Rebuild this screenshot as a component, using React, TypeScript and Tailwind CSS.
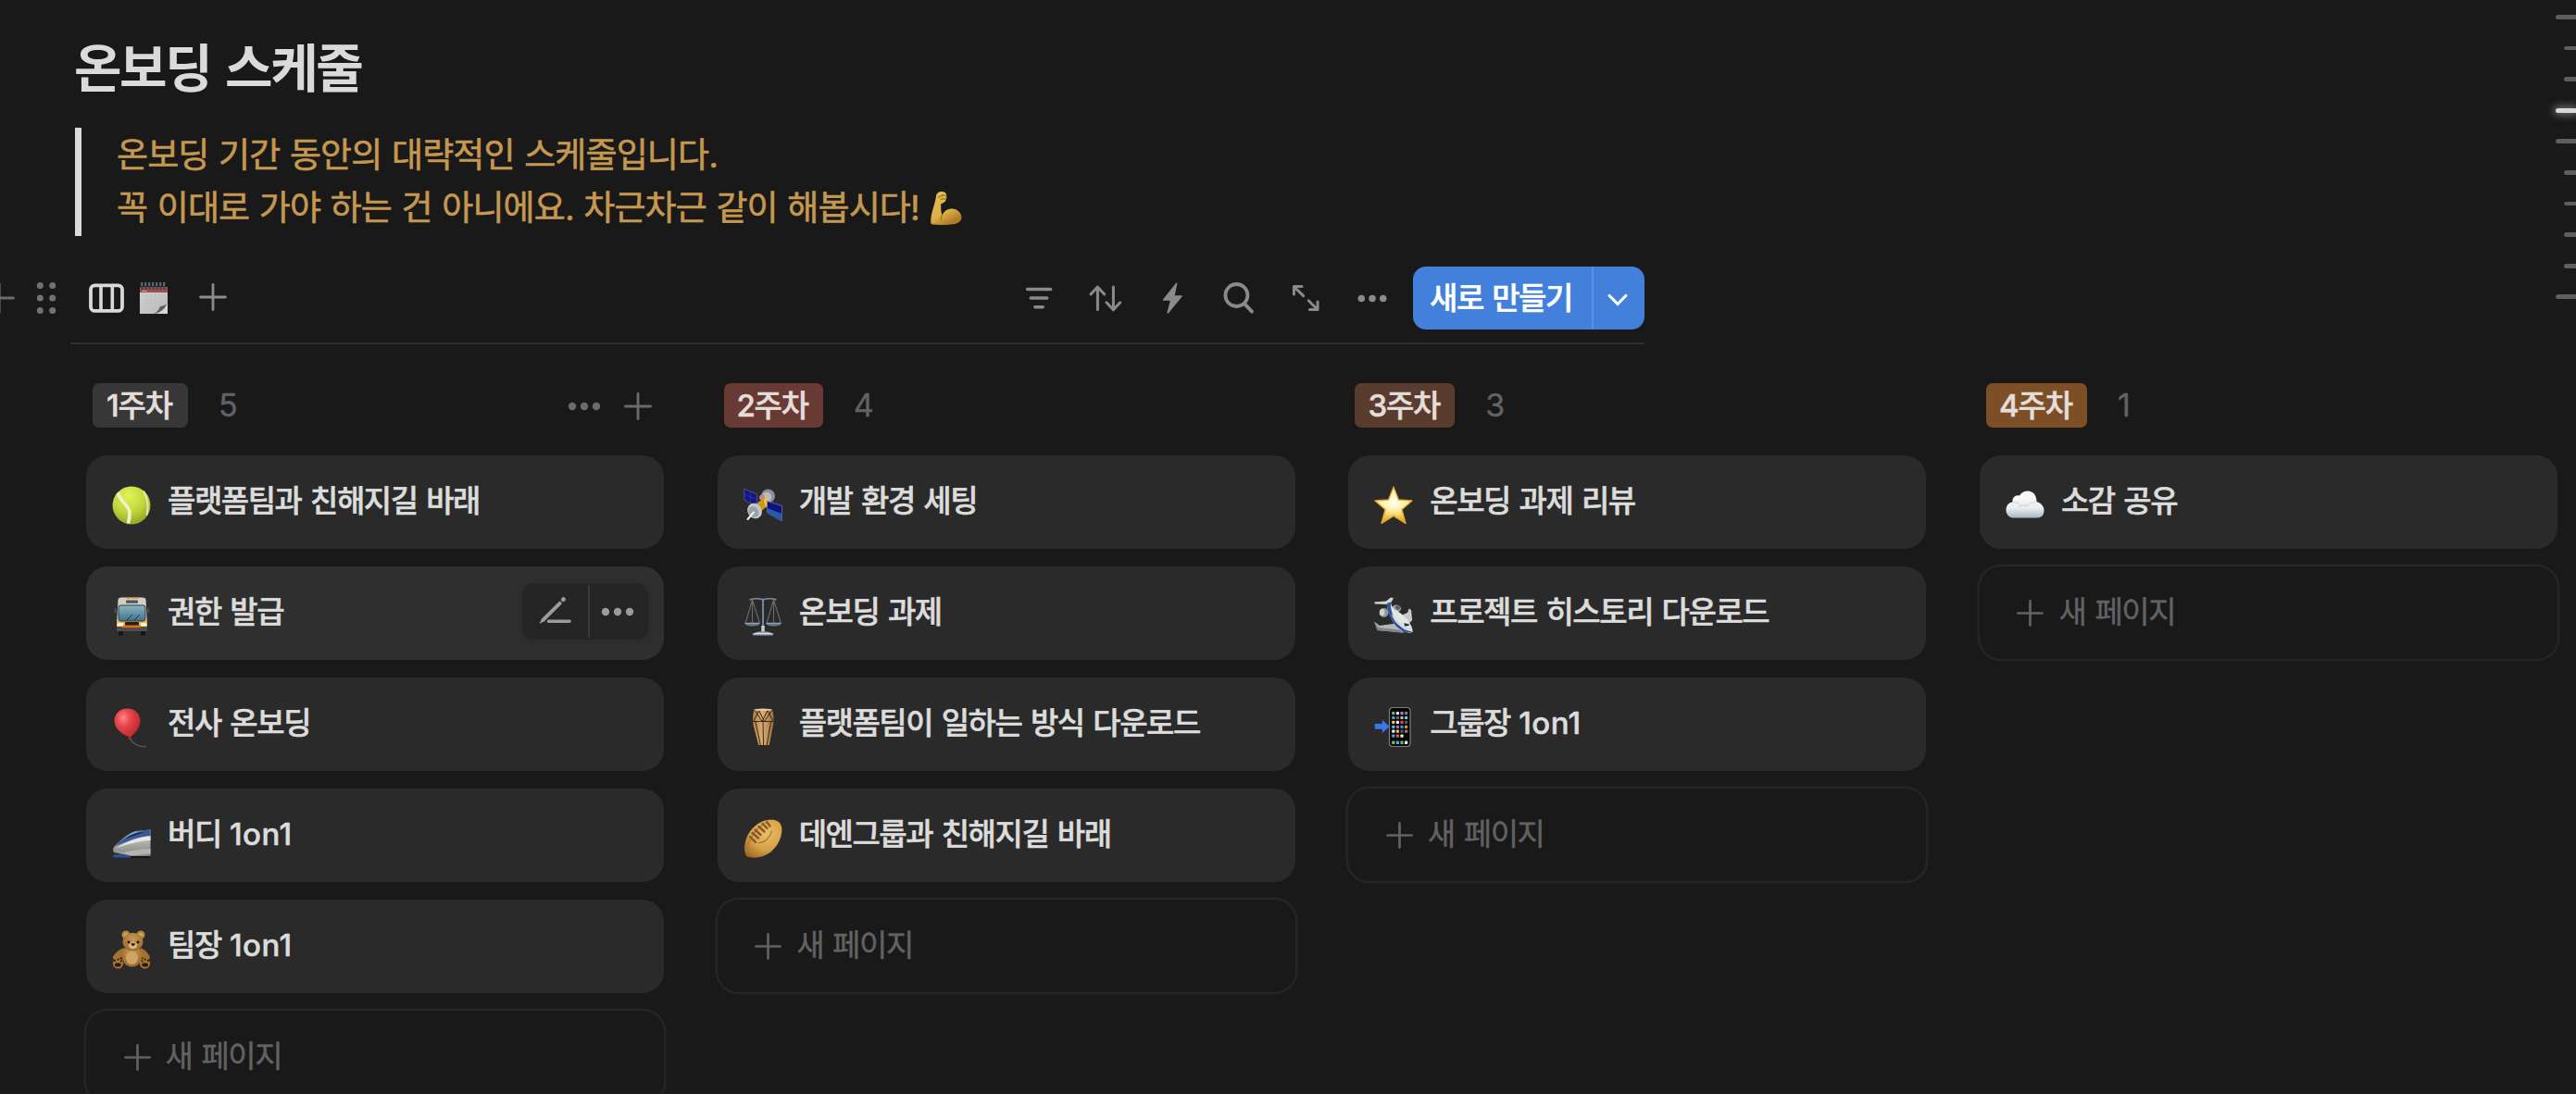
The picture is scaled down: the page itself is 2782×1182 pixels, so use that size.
import React from "react";

type IconProps = { className?: string };

const Plus = ({ className = "" }: IconProps) => (
  <svg viewBox="0 0 30 30" className={className} fill="none" stroke="currentColor" strokeWidth="2.8" strokeLinecap="round">
    <path d="M15 1.5v27M1.5 15h27" />
  </svg>
);

const Dots = ({ className = "" }: IconProps) => (
  <svg viewBox="0 0 36 10" className={className} fill="currentColor">
    <circle cx="5" cy="5" r="4.2" />
    <circle cx="18" cy="5" r="4.2" />
    <circle cx="31" cy="5" r="4.2" />
  </svg>
);

const Grip = () => (
  <svg viewBox="0 0 22 36" className="h-9 w-[22px] shrink-0" fill="#727272">
    {[4.3, 17.7].map((x) => [4.6, 18, 31.4].map((y) => <circle key={`${x}-${y}`} cx={x} cy={y} r="3.5" />))}
  </svg>
);

const BoardIcon = () => (
  <svg viewBox="0 0 38 32" className="h-8 w-[38px] shrink-0" fill="none" stroke="#d9d9d9">
    <rect x="2" y="2.3" width="34" height="27.6" rx="4.5" strokeWidth="3.8" />
    <path d="M13 2v28M25.3 2v28" strokeWidth="3.6" />
  </svg>
);

const Notepad = () => (
  <svg viewBox="0 0 32 36" className="h-9 w-8 shrink-0">
    <defs>
      <linearGradient id="np" x1="0" y1="0" x2="1" y2="1">
        <stop offset="0" stopColor="#d2d2d0" />
        <stop offset="1" stopColor="#b9b9b8" />
      </linearGradient>
    </defs>
    <path d="M1 6h30v29H1z" fill="url(#np)" />
    <path d="M1 6h30v6H1z" fill="#9c4f4e" />
    <path d="M3.5 10.5h5" stroke="#d9a5a3" strokeWidth="1" />
    <path d="M3 16h26M3 20h26M3 24h22M3 28h18M8 13v20M13 13v20M18 13v18M23 13v12" stroke="#bfc1c2" strokeWidth=".7" />
    <path d="M31 22c-2 5-5 4-8 5-2 4-3 6-7 8h15z" fill="#d6d6d5" />
    <path d="M31 22c-2 5-5 4-8 5-2 4-3 6-7 8 8-1 13-6 15-13z" fill="#5d5d5d" />
    <path d="M3.5 1v8M7.5 1v8M11.5 1v8M15.5 1v8M19.5 1v8M23.5 1v8M27.5 1v8" stroke="#39424a" strokeWidth="2" />
    <path d="M3 1v4M7 1v4M11 1v4M15 1v4M19 1v4M23 1v4M27 1v4" stroke="#8b979f" strokeWidth="1" />
  </svg>
);

const FilterIcon = () => (
  <svg viewBox="0 0 36 36" className="size-9" fill="none" stroke="currentColor" strokeWidth="3.6" strokeLinecap="round">
    <path d="M5.6 8.500h25M9.300 18h17.400M13.800 27.700h8.400" />
  </svg>
);
const SortIcon = () => (
  <svg viewBox="0 0 38 36" className="h-9 w-[38px]" fill="none" stroke="currentColor" strokeWidth="3" strokeLinecap="round" strokeLinejoin="round">
    <path d="M10.4 30.600V6.500M3 14l7.400-8 7.400 8M27.400 6v24M20 22.800l7.400 8 7.400-8" />
  </svg>
);
const BoltIcon = () => (
  <svg viewBox="0 0 36 36" className="size-9" fill="currentColor" stroke="currentColor" strokeWidth="1.600" strokeLinejoin="round">
    <path d="M22.600 2.400 8.600 20h8.200l-3.600 14L28 16h-8.300z" />
  </svg>
);
const SearchIcon = () => (
  <svg viewBox="0 0 36 36" className="size-9" fill="none" stroke="currentColor" strokeWidth="3.800" strokeLinecap="round">
    <circle cx="15.400" cy="15" r="12" />
    <path d="M24.400 24.600l7.600 8" />
  </svg>
);
const ExpandIcon = () => (
  <svg viewBox="0 0 36 36" className="size-9" fill="none" stroke="currentColor" strokeWidth="3" strokeLinecap="round" strokeLinejoin="round">
    <path d="M5.400 14V5.600H14M6 6.200l9.600 9.400M31 22v8.600h-8.600M30.400 30l-9.200-9.200" />
  </svg>
);
const PencilIcon = () => (
  <svg viewBox="0 0 34 30" className="h-[30px] w-[34px]" fill="none" stroke="#9b9b9b" strokeLinecap="round">
    <path d="M3.200 26.200 21.600 7.800" strokeWidth="4" />
    <path d="M25.200 3.900l.4-.4" strokeWidth="4.600" />
    <path d="M.8 28.600 5 24" strokeWidth="1.600" />
    <path d="M9.500 27.200H32" strokeWidth="3.400" />
  </svg>
);

const Flex = () => (
  <svg viewBox="0 0 36 38" className="ml-[11px] h-[38px] w-9 shrink-0">
    <defs>
      <linearGradient id="fx" x1="0" y1="0" x2=".5" y2="1">
        <stop offset="0" stopColor="#e6c05c" />
        <stop offset=".7" stopColor="#d9b045" />
        <stop offset="1" stopColor="#b07c28" />
      </linearGradient>
    </defs>
    <path
      d="M7 6C7 3 10 .8 13 1c3.500 0 5.500 2 5.300 5 .2 3-1 6-3.800 7.200-2 .8-2.500.5-2.300 3-.2 4 .3 7 1.300 10.300C15.500 22 19.500 19.500 24 19.500c6 0 10.500 5 10.500 9.500 0 4.500-5 7.500-12 7.500-7.500 1-16 .5-21-.5C0 27 5 18 7 6z"
      fill="url(#fx)"
    />
    <path d="M13.500 26.500c-1.200 1.500-1.500 3-1.200 5M9.500 7.500c1-1.500 3-2 4.500-1.500M12 9.500c1.500-.8 3.500-.8 5.500-.4M13 5c1.800-.6 3.500 0 4.500 1.200" fill="none" stroke="#a0701f" strokeWidth="1.200" strokeLinecap="round" />
  </svg>
);

const TennisBall = () => (
  <>
    <defs>
      <radialGradient id="tb" cx=".42" cy=".25" r=".8">
        <stop offset="0" stopColor="#e2f25a" />
        <stop offset=".55" stopColor="#c0d63c" />
        <stop offset="1" stopColor="#8a9f28" />
      </radialGradient>
    </defs>
    <circle cx="21" cy="21" r="20.500" fill="url(#tb)" />
    <path d="M6.500 7.500C9 18 18.500 20 19 29c.2 4-.6 8-1.600 11.500" fill="none" stroke="#eef2c8" strokeWidth="3.600" />
    <path d="M34 5.500c4.500 8 5.500 18 3.500 26" fill="none" stroke="#e3ebb0" strokeWidth="2" />
  </>
);

const Bus = () => (
  <>
    <defs>
      <linearGradient id="bs" x1="0" y1="0" x2="0" y2="1">
        <stop offset="0" stopColor="#8cb6c4" />
        <stop offset="1" stopColor="#3f708c" />
      </linearGradient>
    </defs>
    <path d="M7 34h5v7.500H7zM31 34h5v7.500h-5z" fill="#151515" />
    <path d="M3.500 12v5M39 12v5" stroke="#4a4a4a" strokeWidth="2.400" />
    <path d="M6.500 3Q7 .6 10 .6h22.500Q36 .6 36.500 3L38 30v6H5v-6z" fill="#d6cfbf" />
    <path d="M5 26h33v9H5z" fill="#eeb52e" />
    <path d="M5 32h33v5H5z" fill="#4e4f50" />
    <path d="M11 30h20v3H11z" fill="#dd6f1f" />
    <rect x="7" y="9" width="29" height="17" rx="2.500" fill="url(#bs)" stroke="#263a44" strokeWidth="1" />
    <rect x="15" y="3.500" width="13" height="3.200" rx="1" fill="#4d5666" />
    <path d="M16 1.300h3M20.500 1.300h3M25 1.300h3" stroke="#e58a2c" strokeWidth="1.600" />
    <path d="M16 25l6-6M24 25l6-6" stroke="#1f3642" strokeWidth="1" />
    <rect x="14" y="27" width="15" height="3.600" rx="1" fill="#2b2113" />
    <rect x="5.500" y="28" width="7" height="3.600" rx="1.500" fill="#f8f4e4" />
    <rect x="30.500" y="28" width="7" height="3.600" rx="1.500" fill="#f8f4e4" />
  </>
);

const Balloon = () => (
  <>
    <defs>
      <radialGradient id="bl" cx=".35" cy=".3" r=".75">
        <stop offset="0" stopColor="#f58a8c" />
        <stop offset=".35" stopColor="#e9474d" />
        <stop offset="1" stopColor="#b32427" />
      </radialGradient>
    </defs>
    <path d="M19.500 33c3 5.500 9 9.200 17.500 8.700" fill="none" stroke="#5f6366" strokeWidth="1.200" />
    <path d="M16.500.5c8.500 0 14 6 14 13.500 0 8-6 13-10.700 17.500l1.400 2.400h-3.600l.6-2.600C11 28.500 2.500 22 2.500 14 2.500 6.500 8 .5 16.500.5z" fill="url(#bl)" />
  </>
);

const Train = () => (
  <>
    <defs>
      <linearGradient id="tr" x1="0" y1="0" x2="0" y2="1">
        <stop offset="0" stopColor="#d6d7d5" />
        <stop offset="1" stopColor="#85847e" />
      </linearGradient>
    </defs>
    <path d="M41.500 11.500V40H20L2 36Q-.5 32 4 28 17 15 26 13z" fill="url(#tr)" />
    <path d="M41.500 11.500v6.500C28 19 16 24 3.500 29.500 14 18 22 14 30 12.500z" fill="#3a5a99" />
    <path d="M34 13c-10 1-17 5-22 9.500 3-4 9-8 15-9z" fill="#8fc3e6" />
    <path d="M35 13.500c-9 1.500-15 3.500-21 7.500 7-2 15-4.500 21-7.500z" fill="#1d2b45" />
    <path d="M41.500 18.500v4.500C29 23.500 16 27.500 5 31 15 25 27 19.500 41.500 18.500z" fill="#e6e7e6" />
    <path d="M41.500 32C30 32 18 35 12 36l-9-2 17 5.500 21.500-2z" fill="#b5b4ae" />
    <path d="M.5 39q9.500-2.500 20 .8v1.700H2z" fill="#2f4f9a" />
    <path d="M20 40h21.500v1.600H20z" fill="#0f1114" />
  </>
);

const Bear = () => (
  <>
    <defs>
      <radialGradient id="br" cx=".5" cy=".35" r=".7">
        <stop offset="0" stopColor="#c99b55" />
        <stop offset="1" stopColor="#96642a" />
      </radialGradient>
    </defs>
    <circle cx="15" cy="5" r="4.500" fill="#b9843f" />
    <circle cx="31" cy="5" r="4.500" fill="#b9843f" />
    <circle cx="15" cy="5.300" r="2.300" fill="#d4a761" />
    <circle cx="31" cy="5.300" r="2.300" fill="#d4a761" />
    <path d="M13 19C7 21 2 26 .8 29.500 1 32.500 5 32 9 30l5-4zM31 19c5 2 9 7 10 10.500-.5 3-4 2.500-7.500.5L28 26z" fill="#a4712f" />
    <ellipse cx="21.500" cy="28" rx="11" ry="11.500" fill="url(#br)" />
    <ellipse cx="21.500" cy="30" rx="6.500" ry="7" fill="#cfa566" />
    <ellipse cx="22.500" cy="12.500" rx="11" ry="9.800" fill="url(#br)" />
    <ellipse cx="22.500" cy="16.500" rx="4.600" ry="3.800" fill="#dcb678" />
    <circle cx="18" cy="13" r="1.400" fill="#171008" />
    <circle cx="28" cy="13" r="1.400" fill="#171008" />
    <path d="M20.800 14.800h3.800l-1.900 2.200z" fill="#20140a" stroke="#20140a" strokeLinejoin="round" />
    <circle cx="6.500" cy="36" r="5.600" fill="#a87535" />
    <circle cx="35.500" cy="36" r="5.600" fill="#a87535" />
    <path d="M4.800 37.500h3M34.200 37.500h3" stroke="#2a1a0b" strokeWidth="3.800" strokeLinecap="round" />
    <path d="M3 33h.1M6.500 31.800h.1M9.800 33.500h.1M32.500 33.500h.1M35.700 31.800h.1M39 33h.1" stroke="#2a1a0b" strokeWidth="2" strokeLinecap="round" />
  </>
);

const Satellite = () => (
  <>
    <circle cx="26.500" cy="11" r="7.500" fill="#8d9094" />
    <circle cx="25" cy="12" r="5.300" fill="#b9bcbe" />
    <path d="M13 20l10-8 5 8-10 8z" fill="#c89a20" />
    <path d="M21 13l3-2 4 9-4 3z" fill="#e8c93c" />
    <circle cx="20" cy="12.500" r="3" fill="#c98784" />
    <path d="M.8 3 14.500 9v9L9.500 20 .8 15z" fill="#14177e" stroke="#5c65a8" strokeWidth=".7" />
    <path d="M7.600 6v12M.8 9l13.700 6" stroke="#3a42b4" strokeWidth=".6" />
    <path d="M25.500 16.500 41.500 21.500V38L25.500 29z" fill="#0e1280" stroke="#6f86b8" strokeWidth=".7" />
    <path d="M25.500 24 41.500 30v8L25.500 29z" fill="#2a5ba8" />
    <ellipse cx="12" cy="27" rx="7.600" ry="8.600" transform="rotate(-35 12 27)" fill="#c3c7ca" />
    <ellipse cx="10.800" cy="28" rx="5.200" ry="6.200" transform="rotate(-35 10.800 28)" fill="#9ca1a5" />
    <path d="M4.500 36l6.500-7.500" stroke="#f0f0f0" strokeWidth="2" strokeLinecap="round" />
  </>
);

const Scales = () => (
  <>
    <path d="M6.500 3q7-2.500 14.500 0 7.500-2.500 14.500 0" fill="none" stroke="#7f8c9a" strokeWidth="1.600" />
    <path d="M9.500 3 2 28.500M9.500 3v25M9.500 3 17.500 28.500M32.500 3 25 28.500M32.500 3v25M32.500 3 40.500 28.500" fill="none" stroke="#666c72" strokeWidth="1.100" />
    <path d="M21 1.500v33" stroke="#71869e" strokeWidth="2" />
    <path d="M21 31v6" stroke="#c3ccd4" strokeWidth="3.600" />
    <path d="M.8 28h17.400q-1.200 3.600-8.700 3.600T.8 28zM23.800 28h17.400q-1.200 3.600-8.700 3.600t-8.700-3.600z" fill="#66788c" />
    <path d="M2 28.300h15M25 28.300h15" stroke="#a3b0bc" strokeWidth="1" />
    <path d="M9.500 39.500q11.500-5 23 0l-.8 2H10.300z" fill="#94a3b2" />
    <path d="M12 39.500h18" stroke="#e3e8ec" strokeWidth="1" />
  </>
);

const Drum = () => (
  <>
    <defs>
      <linearGradient id="dr" x1="0" y1="0" x2="1" y2="0">
        <stop offset="0" stopColor="#a97c47" />
        <stop offset=".45" stopColor="#dcae76" />
        <stop offset="1" stopColor="#9b6e3b" />
      </linearGradient>
    </defs>
    <path d="M11.500 1.500h19.500q2.500 8 1 17L27.500 41h-11L10.500 18.500q-1.500-9 1-17z" fill="url(#dr)" />
    <path d="M10 14.500h22.500M12 2l8 12.500L26.500 1.500M16 1.500l6.500 13L31 2M11 14 17 2M25.500 2l6.500 12M13 15l5.500 26M21 15l.5 26M29.500 15l-4.500 26M16 40.500h12" fill="none" stroke="#3a2714" strokeWidth="1" />
    <ellipse cx="21.200" cy="1.800" rx="10" ry="1.200" fill="#e9c795" />
  </>
);

const Rugby = () => (
  <>
    <defs>
      <radialGradient id="rg" cx=".6" cy=".35" r=".8">
        <stop offset="0" stopColor="#e9bf66" />
        <stop offset=".55" stopColor="#d6a147" />
        <stop offset="1" stopColor="#9a6423" />
      </radialGradient>
    </defs>
    <path d="M27 .8c8-.8 13 1.500 14.200 8 1.200 8.500-3 19-11 26-7.500 6.500-18 8-26 6C.6 38 0 31 2.500 22.500 6 11 16.500 1.800 27 .8z" fill="url(#rg)" />
    <path d="M4 34C4 26 10 12 24 4" fill="none" stroke="#b07c2f" strokeWidth="1.400" />
    <path d="M16.500 25.500c6 0 12-5 14-13" fill="none" stroke="#8a5d24" strokeWidth="1" />
    <path d="M7 19l6 6M9.500 15l6.500 5.500M12.500 11.500l6 5.500M16.500 8l6 5.500M20.500 5l5 5M25 3l3.500 4.500" stroke="#8b5529" strokeWidth="2.400" strokeLinecap="round" />
  </>
);

const Star = () => (
  <>
    <defs>
      <linearGradient id="st" x1="0" y1="0" x2="0" y2="1">
        <stop offset="0" stopColor="#fdf3b0" />
        <stop offset=".5" stopColor="#fdf3a8" />
        <stop offset=".78" stopColor="#f2cf4d" />
        <stop offset="1" stopColor="#d9902c" />
      </linearGradient>
      <radialGradient id="st2" cx=".5" cy=".42" r=".5">
        <stop offset="0" stopColor="#fffff2" />
        <stop offset="1" stopColor="#fffbd0" stopOpacity="0" />
      </radialGradient>
    </defs>
    <path
      d="M21 1.200 26.500 15l14.500 1-11 9.500 4 15L21 32.500 8 40.500l4-15L1 16 15.500 15z"
      fill="url(#st)"
      stroke="#e3a63a"
      strokeWidth="1.300"
      strokeLinejoin="round"
    />
    <path d="M21 4 25.500 16.500l12 .8-9.200 7.700 3.200 12L21 30.500 10.500 37l3.200-12L4.500 17.300l12-.8z" fill="url(#st2)" />
  </>
);

const Plane = () => (
  <>
    <path d="M0 5.500 13 4.500 18 .5l3 .8-2.500 4.500L14 8 1 7.500z" fill="#d0d3d6" />
    <path d="M27 21 36 17l1.700-4.500L40 14l1.200 11L35 31z" fill="#c6cacd" />
    <path d="M0 26.500 6 31l18-2.500 8 10L3.500 36z" fill="#b4b8bb" />
    <path d="M0 26.500 5 33l22 2.500 6 3.500L3.500 36z" fill="#7f8487" />
    <ellipse cx="24" cy="12.500" rx="5" ry="4" fill="#9da3a8" />
    <ellipse cx="25.500" cy="11.500" rx="2.600" ry="2.400" fill="#5d6367" />
    <path d="M13.500 7 18 5.500q1 7 6 9 10 6 14.500 14 3.500 5 3 9.500-5 2-12-2Q21 31 17.500 21 14 14 13.500 7z" fill="#e3e5e7" />
    <path d="M13.500 7 18 5.500q-.5 5 1 10 2.500 10 9 15.500 6 5.500 13.500 6.500-6 2.500-12-1.500Q21 31 17.500 21 14 14 13.500 7z" fill="#2f559f" />
    <path d="M18.500 18q3 9 9 13 5 5 11 5.500 2-1 2.500-3Q32 33 24 24z" fill="#d5d8db" />
    <ellipse cx="10.500" cy="17" rx="5" ry="5" fill="#8f959a" />
    <ellipse cx="8.800" cy="16.500" rx="2.800" ry="3.800" fill="#cdd1d4" />
    <path d="M32 28.500q4.500-.5 6.500 2l-5 1.200z" fill="#23282e" />
  </>
);

const appRows = [
  ["#5dc35f", "#e9e9e9", "#b27bd6", "#7d7f84"],
  ["#55a4e8", "#666b70", "#c9b48a", "#6ad0ea"],
  ["#e3d04c", "#f0f0f0", "#dd4b45", "#55585c"],
  ["#49c7d8", "#c955c9", "#3f8fe6", "#ee8a2f"],
  ["#efefef", "#e2c13f", "#55585c", "#85878b"],
  ["#4aa3e8", "#e35550", "#f0f0f0", "#0c0c0c"],
];

const Phone = () => (
  <>
    <rect x="16.500" y="-.5" width="22.500" height="42" rx="3.400" fill="#060606" stroke="#7d7d7d" strokeWidth="1.200" />
    {appRows.map((row, y) => row.map((c, x) => <rect key={`${x}-${y}`} x={19.2 + x * 4.6} y={4 + y * 4.9} width="3.200" height="3.200" rx=".7" fill={c} />))}
    {["#5fce5a", "#46a6ee", "#58c957", "#ececec"].map((c, x) => (
      <rect key={c} x={19.2 + x * 4.6} y="35.500" width="3.200" height="3.600" rx=".7" fill={c} />
    ))}
    <path d="M.8 17h8v-4.300l7.700 7.300-7.700 7v-4.300h-8z" fill="#3878ee" />
  </>
);

const Cloud = () => (
  <>
    <defs>
      <linearGradient id="cl" x1="0" y1="0" x2="0" y2="1">
        <stop offset="0" stopColor="#ffffff" />
        <stop offset=".65" stopColor="#e9edf1" />
        <stop offset="1" stopColor="#a9b6c0" />
      </linearGradient>
    </defs>
    <path d="M8 34.500C3 34 .5 30 .5 26c0-5 3-8 7-8.500-.5-5 3-8 7.500-7C17 7 20.500 5.500 24 5.500c6 0 9.500 5 9.500 11.500 5 1.500 8 5 8 9.500 0 5-3 8-7.500 8z" fill="url(#cl)" />
    <path d="M14.500 23c1.500-2.500 5-3 7.500-1 2-2.500 6-4 10-4.500M9 18c3-.5 5 .5 6 2" fill="none" stroke="#ccd4da" strokeWidth="1.200" strokeLinecap="round" />
  </>
);

type Card = { title: string; suffix?: string; art: React.FC; hovered?: boolean };
type Column = { name: string; tag: string; cards: Card[]; actions?: boolean };

const columns: Column[] = [
  {
    name: "1주차",
    tag: "bg-[#373737] w-[103px]",
    actions: true,
    cards: [
      { title: "플랫폼팀과 친해지길 바래", art: TennisBall },
      { title: "권한 발급", art: Bus, hovered: true },
      { title: "전사 온보딩", art: Balloon },
      { title: "버디", suffix: "1on1", art: Train },
      { title: "팀장", suffix: "1on1", art: Bear },
    ],
  },
  {
    name: "2주차",
    tag: "bg-[#693a34] w-[107px]",
    cards: [
      { title: "개발 환경 세팅", art: Satellite },
      { title: "온보딩 과제", art: Scales },
      { title: "플랫폼팀이 일하는 방식 다운로드", art: Drum },
      { title: "데엔그룹과 친해지길 바래", art: Rugby },
    ],
  },
  {
    name: "3주차",
    tag: "bg-[#5a3c2f] w-[108px]",
    cards: [
      { title: "온보딩 과제 리뷰", art: Star },
      { title: "프로젝트 히스토리 다운로드", art: Plane },
      { title: "그룹장", suffix: "1on1", art: Phone },
    ],
  },
  { name: "4주차", tag: "bg-[#7d4f27] w-[109px]", cards: [{ title: "소감 공유", art: Cloud }] },
];

const BoardCard = ({ title, suffix, art: Art, hovered }: Card) => (
  <div className={`flex h-[101px] rounded-[23px] pl-7 ${hovered ? "bg-[#2f2f2f]" : "bg-[#2a2a2a]"}`}>
    <svg viewBox="0 0 42 42" className="mt-[33px] size-[42px] shrink-0 overflow-visible">
      <Art />
    </svg>
    <div className="ml-[18px] pt-[25px] text-[33px] leading-[48px] font-medium tracking-[-1.46px] whitespace-nowrap text-[#dcdcdc] [-webkit-text-stroke:0.5px_#dcdcdc] [word-spacing:2.2px]">
      {title}
      {suffix && <span className="tracking-[0.4px] [word-spacing:0px]"> {suffix}</span>}
    </div>
    {hovered && (
      <div className="mt-[18px] mr-[17px] ml-auto flex h-[61px] w-[136px] items-center rounded-[12px] bg-[#252525] shadow-[0_2px_8px_rgba(0,0,0,0.12)]">
        <div className="flex h-full w-[71px] items-center justify-center pb-1 pl-px">
          <PencilIcon />
        </div>
        <div className="h-[57px] w-0.5 bg-[#3a3a3a]" />
        <div className="flex flex-1 items-center justify-center pr-[3px] text-[#9b9b9b]">
          <Dots className="h-[10px] w-9" />
        </div>
      </div>
    )}
  </div>
);

const railMarks = [true, false, false, true, true, false, false, false, false, true];

export default function App() {
  return (
    <div className="relative h-[1182px] w-[2782px] overflow-hidden bg-[#191919] font-['Inter','Noto_Sans_CJK_KR',sans-serif]">
      <div className="pt-[38px] pl-[81px]">
        <h1 className="-ml-px h-[72px] text-[56px] leading-[72px] font-semibold tracking-[-2.4px] whitespace-nowrap text-[#dadada] [word-spacing:4px]">온보딩 스케줄</h1>
        <div className="mt-7 flex h-[117px] border-l-[7px] border-[#dadada] pl-[38px]">
          <div className="pt-px text-[37px] leading-[57px] tracking-[-0.87px] whitespace-nowrap text-[#c59850] [-webkit-text-stroke:0.6px_#c59850] [word-spacing:1px]">
            <div>온보딩 기간 동안의 대략적인 스케줄입니다.</div>
            <div className="flex items-center">
              <span>꼭 이대로 가야 하는 건 아니에요. 차근차근 같이 해봅시다!</span>
              <Flex />
            </div>
          </div>
        </div>
      </div>

      <div className="mt-[33px] flex h-[68px] w-[1776px] items-center">
        <Plus className="-ml-[18px] h-[34px] w-[34px] shrink-0 text-[#6d6d6d]" />
        <div className="ml-[22.5px] flex shrink-0">
          <Grip />
        </div>
        <div className="ml-[35px] flex shrink-0 items-center">
          <BoardIcon />
          <div className="ml-4">
            <Notepad />
          </div>
        </div>
        <Plus className="-mt-0.5 ml-[33.5px] size-[30px] shrink-0 text-[#8c8c8c]" />
        <div className="ml-auto flex items-center text-[#8a8a8a]">
          <FilterIcon />
          <div className="ml-[35px]"><SortIcon /></div>
          <div className="ml-[35px]"><BoltIcon /></div>
          <div className="ml-9"><SearchIcon /></div>
          <div className="ml-9"><ExpandIcon /></div>
          <Dots className="ml-[37px] h-[9px] w-[34px]" />
        </div>
        <div className="ml-[27px] flex h-full w-[250px] shrink-0 overflow-hidden rounded-[14px] bg-[#4380db] text-white">
          <div className="w-[193px] shrink-0 pt-[10px] pl-[18px] text-[33px] leading-[48px] font-medium tracking-[-1.46px] whitespace-nowrap [-webkit-text-stroke:0.5px_white] [word-spacing:2px]">새로 만들기</div>
          <div className="flex flex-1 items-center justify-center border-l-2 border-[#5b91e1] pr-1">
            <svg viewBox="0 0 22 16" className="mt-1 h-4 w-[22px]" fill="none" stroke="white" strokeWidth="3.2" strokeLinecap="round" strokeLinejoin="round">
              <path d="M2.200 3.500 11 12.500l8.800-9" />
            </svg>
          </div>
        </div>
      </div>
      <div className="mt-[14px] ml-[76px] h-0.5 w-[1700px] bg-[#2f2f2f]" />

      <div className="mt-[42px] ml-[93px] flex gap-[57.67px]">
        {columns.map((col) => (
          <div key={col.name} className="w-[624px] shrink-0">
            <div className="flex h-12 items-center pl-[7px]">
              <div className={`h-12 rounded-[7px] pr-0.5 text-center text-[33px] leading-[48px] font-medium tracking-[-1.2px] whitespace-nowrap text-[#e4dedb] [-webkit-text-stroke:0.5px_#e4dedb] ${col.tag}`}>{col.name}</div>
              <div className="ml-[33px] text-[34px] leading-12 text-[#626262] [-webkit-text-stroke:0.4px_#626262]">{col.cards.length}</div>
              {col.actions && (
                <div className="mt-0.5 mr-[13px] ml-auto flex items-center text-[#6b6b6b]">
                  <Dots className="h-[10px] w-9" />
                  <Plus className="ml-[25px] size-[30px]" />
                </div>
              )}
            </div>
            <div className="mt-[30px] flex flex-col gap-[19px]">
              {col.cards.map((card) => (
                <BoardCard key={card.title} {...card} />
              ))}
              <div className="flex h-[100px] items-center rounded-[23px] pl-[40.5px] text-[#626262] shadow-[0_0_0_2.5px_#252525]">
                <Plus className="size-[29px]" />
                <div className="ml-4 pb-[3px] text-[33px] leading-[48px] tracking-[-1.46px] [-webkit-text-stroke:0.4px_#626262] [word-spacing:2.2px]">새 페이지</div>
              </div>
            </div>
          </div>
        ))}
      </div>

      <div className="absolute top-4 right-0 flex flex-col items-end gap-[28.8px]">
        {railMarks.map((long, i) => (
          <div
            key={i}
            className={`h-[4.8px] rounded-l-full ${long ? "w-[22px]" : "w-[13px]"} ${i === 3 ? "bg-[#d8d8d8] shadow-[0_0_9px_2px_rgba(255,255,255,0.4)]" : "bg-[#5e5e5e]"}`}
          />
        ))}
      </div>
    </div>
  );
}
